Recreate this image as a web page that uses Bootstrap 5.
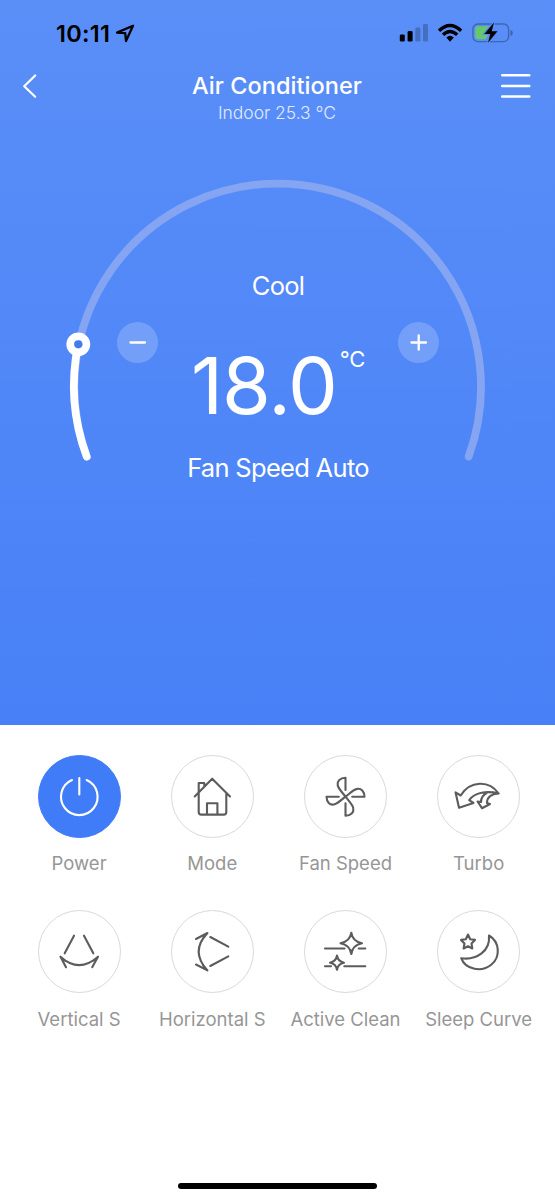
<!DOCTYPE html>
<html lang="en">
<head>
<meta charset="utf-8">
<meta name="viewport" content="width=device-width, initial-scale=1">
<title>Air Conditioner</title>
<link href="https://cdn.jsdelivr.net/npm/bootstrap@5.3.0/dist/css/bootstrap.min.css" rel="stylesheet">
<script src="https://cdn.jsdelivr.net/npm/bootstrap@5.3.0/dist/js/bootstrap.bundle.min.js" defer></script>
<style>
body{font-family:Inter,"Liberation Sans",sans-serif;background:#fff;height:1200px;overflow:hidden}
.hero{height:724.5px;background:linear-gradient(#5a8ff8,#4880f7);color:#fff}
.status{height:60px;padding:0 42px 0 56px;color:#000}
.clock{font-size:23.5px;font-weight:600;line-height:26px;letter-spacing:.3px;width:57px;margin-top:20.5px}
.topbar{height:70px;padding:9px 24px 0 22px}
.plain{border:0;background:none;padding:0;line-height:0;color:inherit}
.title{font-size:23.5px;font-weight:500;line-height:30px;letter-spacing:.05px;margin:2px 0 0 1px}
.indoor{font-size:17.5px;font-weight:300;line-height:22px;letter-spacing:-.05px;margin:1px 0 0 1px;color:#e0eaff}
.gauge{display:grid;height:370px}
.gauge>*{grid-area:1/1}
.readout{padding:138px 116px 0 117px}
.mid{font-size:25.5px;font-weight:400;line-height:36px;letter-spacing:-.7px}
.dial-row{height:130px;margin-top:18px}
.step-btn{width:41px;height:41px;border-radius:50%;background:rgba(255,255,255,.2);border:0;padding:0;line-height:0;color:#fff}
.temp{font-size:79px;font-weight:400;line-height:80px;letter-spacing:-1px;margin-top:22.500px}
.unit{font-size:22px;font-weight:400;line-height:24px;letter-spacing:-.3px;margin:24.500px 0 0 3px}
.tiles{display:grid;grid-template-columns:repeat(4,133.2px);row-gap:0;padding:30px 0 0 12.5px}
.tile{height:155.5px}
.disc{width:83px;height:83px;border-radius:50%;border:1px solid #d9d9d9;color:#5c5c5c}
.disc svg{display:block;margin:-1px}
.disc.on{background:#417cf8;border-color:#417cf8;color:#fff}
.tile-label{font-size:18.5px;font-weight:400;line-height:24px;margin-top:13.5px;color:#969696;white-space:nowrap}
.ico{fill:none;stroke:currentColor;stroke-width:2.1;stroke-linecap:round;stroke-linejoin:round}
.home-bar{width:199px;height:6px;border-radius:3px;background:#000}
</style>
</head>
<body class="d-flex flex-column">
<header class="hero d-flex flex-column flex-shrink-0">
  <div class="status d-flex justify-content-between">
    <div class="d-flex">
      <span class="clock">10:11</span>
      <svg width="22" height="26" viewBox="113 20 22 26" style="margin-top:20px"><path d="M117 32.6 133 25.800 126 41 125.200 33.200Z" fill="none" stroke="#000" stroke-width="2.3" stroke-linejoin="round"/></svg>
    </div>
    <svg width="115" height="60" viewBox="398 0 115 60">
      <rect x="399.8" y="34.5" width="5" height="7" rx="1.3"/><rect x="407.6" y="31" width="5" height="10.5" rx="1.3"/>
      <g opacity=".22"><rect x="415.3" y="27.6" width="5" height="13.9" rx="1.3"/><rect x="423" y="24" width="5" height="17.5" rx="1.3"/></g>
      <g fill="none" stroke="#000" stroke-width="3.4"><path d="M439 30.7Q450 20.2 461.2 30.7"/><path d="M443 34.8Q450 28.2 457.2 34.8"/></g>
      <path d="M446.3 37.6Q450 34 453.8 37.6L450 41.7Z"/>
      <rect x="472.9" y="24" width="35.7" height="17.6" rx="5" fill="none" stroke="#3f65ae" stroke-width="1.3"/>
      <path d="M510.4 30Q512.8 30.6 512.8 33T510.4 36Z" fill="#3f65ae"/>
      <path d="M478.5 26.3H489L482 35H488L485.5 39.3H478.5Q475.3 39.3 475.3 36V29.5Q475.3 26.3 478.5 26.3Z" fill="#67c76b"/>
      <path d="M494 22.5 484.3 34H490.3L488 42.7 497.500 31.300H491.7Z" stroke="#568bf3" stroke-width="2" paint-order="stroke"/>
    </svg>
  </div>
  <div class="topbar d-flex justify-content-between align-items-start">
    <button class="plain" aria-label="Back"><svg width="30" height="34" viewBox="22 69 30 34"><path d="M35.200 75.500 24.200 86.200 35.200 96.800" fill="none" stroke="#fff" stroke-width="2.2" stroke-linecap="round" stroke-linejoin="round"/></svg></button>
    <div class="text-center"><h1 class="title">Air Conditioner</h1><div class="indoor">Indoor 25.3 °C</div></div>
    <button class="plain" aria-label="Menu"><svg width="30" height="34" viewBox="501 69 30 34"><path d="M502.2 75.3H529.3M502.2 86H529.3M502.2 96.6H529.3" stroke="#fff" stroke-width="2.5" stroke-linecap="round"/></svg></button>
  </div>
  <main class="gauge">
    <svg width="555" height="370" viewBox="0 130 555 370" fill="none" stroke-width="7.8" stroke-linecap="round">
      <path d="M86.7 456.5A203.3 203.3 0 1 1 468.700 456.500" stroke="#85a5f3"/>
      <path d="M78.3 344A203.3 203.3 0 0 0 86.7 456.5" stroke="#fff"/>
      <circle cx="78.3" cy="344.3" r="8" stroke="#fff"/><circle cx="78.3" cy="344.3" r="4.1" fill="#447cec"/>
    </svg>
    <div class="readout text-center">
      <div class="mid">Cool</div>
      <div class="dial-row d-flex justify-content-between align-items-start">
        <button class="step-btn" aria-label="Decrease"><svg width="41" height="41"><path d="M13.500 20.500H28" stroke="#fff" stroke-width="2.3" stroke-linecap="round"/></svg></button>
        <div class="d-flex"><span class="temp">18.0</span><span class="unit">°C</span></div>
        <button class="step-btn" aria-label="Increase"><svg width="41" height="41"><path d="M13.500 20.500H28M20.700 13.300V27.700" stroke="#fff" stroke-width="2.3" stroke-linecap="round"/></svg></button>
      </div>
      <div class="mid" style="margin-top:-2px">Fan Speed Auto</div>
    </div>
  </main>
</header>
<section class="tiles text-center">
  <div class="tile d-flex flex-column align-items-center"><div class="disc on"><svg class="ico" width="83" height="83"><path d="M34 25A18.300 18.300 0 1 0 48.600 25M41.300 23V39.500"/></svg></div><div class="tile-label">Power</div></div>
  <div class="tile d-flex flex-column align-items-center"><div class="disc"><svg class="ico" width="83" height="83"><path d="M23.700 41.500 41.200 23.700 59 41.500M27.700 38V57Q27.700 59.600 30.300 59.600H52.700Q55.300 59.600 55.300 57V38M27.700 37V28H33.300V31.500M36 59.600V48.200H46.400V59.600"/></svg></div><div class="tile-label">Mode</div></div>
  <div class="tile d-flex flex-column align-items-center"><div class="disc"><svg class="ico" width="83" height="83"><g id="blade"><path d="M41.500 35V22.700C36 22.900 33 26 33.700 30C34.300 34 38.500 37.500 41.500 41.700"/></g><use href="#blade" transform="rotate(90 41.500 41.700)"/><use href="#blade" transform="rotate(180 41.500 41.700)"/><use href="#blade" transform="rotate(270 41.500 41.700)"/></svg></div><div class="tile-label">Fan Speed</div></div>
  <div class="tile d-flex flex-column align-items-center"><div class="disc"><svg class="ico" width="83" height="83"><path d="M61.700 38.500C52 25 33 25.500 23.700 40.500L18.500 37.300 22 52.700 36.500 48 32.200 45.200C37.500 37.300 50 35.500 61.700 38.500C55 39 50 42 50 48L53 49 45 53.200 40.500 46.500 44 47C44 42.500 46.500 39.500 50.500 37.500"/></svg></div><div class="tile-label">Turbo</div></div>
  <div class="tile d-flex flex-column align-items-center"><div class="disc"><svg class="ico" width="83" height="83"><path d="M36 25.700 26.700 43.300M46 25.700 55.300 43.300M22.500 46.700Q41 63.500 60 46.700M28 57.200 22.500 46.700 27.500 51M54.200 57.200 60 46.700 54.700 51"/></svg></div><div class="tile-label">Vertical S</div></div>
  <div class="tile d-flex flex-column align-items-center"><div class="disc"><svg class="ico" width="83" height="83"><path d="M39.300 27 57.300 36.700M39.300 56 57.300 46.300M36.400 23Q19 41.500 36.400 60.400M25 29 36.400 23 32 28.500M25 54.500 36.400 60.400 32 55"/></svg></div><div class="tile-label">Horizontal S</div></div>
  <div class="tile d-flex flex-column align-items-center"><div class="disc"><svg class="ico" width="83" height="83"><path d="M47.300 22.700Q48.500 31.500 58 33.300Q48.500 35.200 47.300 44Q46 35.200 36.500 33.300Q46 31.500 47.300 22.700ZM33 45.500Q34 51.500 40 52.700Q34 53.800 33 59.800Q32 53.800 26 52.700Q32 51.500 33 45.500ZM21 38.500H40.500M54.700 38.500H61.300M21 56.300H27M40.300 56.300H61.300"/></svg></div><div class="tile-label">Active Clean</div></div>
  <div class="tile d-flex flex-column align-items-center"><div class="disc"><svg class="ico" width="83" height="83"><path d="M52 25.500C63 32 63.500 47 54.500 54.500C45 62.500 28.500 60 24.200 48.200C39 50.500 53.500 41.500 52 25.500ZM31 24.500 33.200 29.200 38 29.900 34.500 33.500 35.300 38.500 31 36.200 26.600 38.500 27.500 33.500 24 29.900 28.800 29.200Z"/></svg></div><div class="tile-label">Sleep Curve</div></div>
</section>
<footer class="d-flex justify-content-center mt-auto" style="height:17px"><div class="home-bar"></div></footer>
</body>
</html>
